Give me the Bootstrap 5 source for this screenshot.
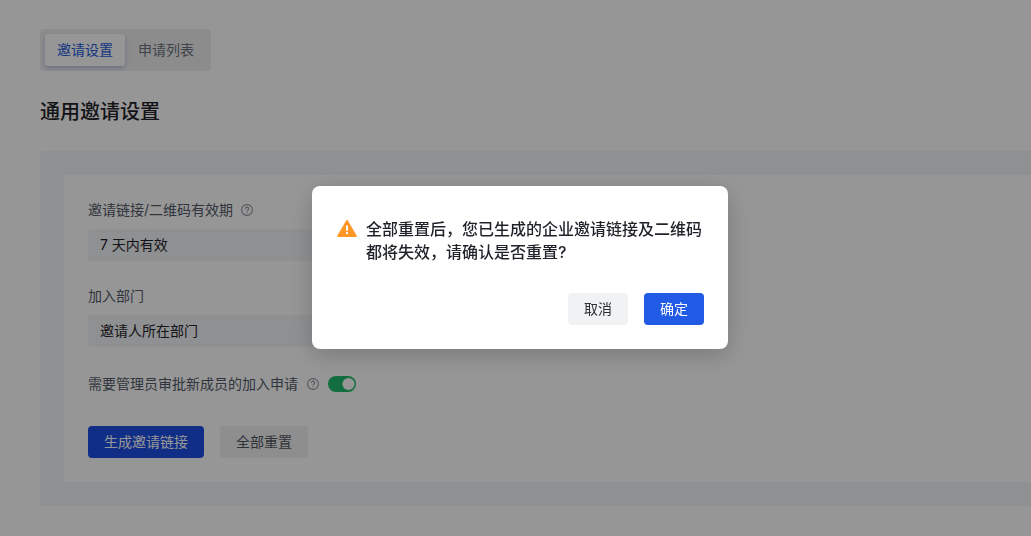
<!DOCTYPE html>
<html lang="zh-CN">
<head>
<meta charset="utf-8">
<meta name="viewport" content="width=device-width, initial-scale=1">
<title>通用邀请设置</title>
<link href="https://cdn.jsdelivr.net/npm/bootstrap@5.3.0/dist/css/bootstrap.min.css" rel="stylesheet">
<style>
  body { font-family: Inter, "Noto Sans CJK SC", sans-serif; font-size: 14px; line-height: 22px; color: #1f2329; background: #fff; }
  .page { padding: 29px 0 30px 40px; }
  .seg { background: #efeff0; padding: 5px; gap: 1px; border-radius: 4px; }
  .seg .nav-link { padding: 5px 12px; border-radius: 3px; color: #6b7480; line-height: 22px; }
  .seg .nav-link.active { background: #fff; color: #245bdb; box-shadow: 0 2px 5px rgba(36, 70, 160, .28); }
  .page-title { font-size: 20px; line-height: 28px; font-weight: 500; margin: 27px 0 25px; }
  .panel { background: #f3f5f9; padding: 24px 0 24px 24px; border-radius: 4px 0 0 4px; }
  .panel-body { background: #fff; padding: 24px; border-radius: 4px 0 0 4px; }
  .field-label { color: #545c6a; line-height: 22px; }
  .field-select { width: 320px; height: 32px; padding: 0 32px 0 12px; border: 0; border-radius: 4px; background-color: #f3f5f8; font-size: 14px; line-height: 22px; color: #1f2329; }
  .help { width: 12px; height: 12px; color: #8f959e; }
  .approval { min-height: 26px; margin-bottom: 29px; gap: 9px; }
  .form-switch .toggle { width: 28px; height: 16px; margin: 0; border: 0; background-color: #1fba6b; background-size: 14px 14px;
    background-image: url("data:image/svg+xml,%3Csvg xmlns='http://www.w3.org/2000/svg' viewBox='0 0 14 14'%3E%3Ccircle cx='6.5' cy='7' r='6.1' fill='%23fff'/%3E%3C/svg%3E") !important; }
  .form-switch .toggle:checked { background-color: #1fba6b; background-position: right center; }
  .btn { --bs-btn-font-size: 14px; --bs-btn-line-height: 22px; --bs-btn-padding-x: 16px; --bs-btn-padding-y: 5px; --bs-btn-border-width: 0; --bs-btn-border-radius: 4px; }
  .btn-main { --bs-btn-color: #fff; --bs-btn-bg: #215ae5; --bs-btn-hover-color: #fff; --bs-btn-hover-bg: #3370ff; }
  .btn-main-deep { --bs-btn-bg: #1e4ee6; }
  .btn-plain { --bs-btn-color: #2b2f36; --bs-btn-bg: #f1f2f4; --bs-btn-hover-bg: #e5e6e9; }
  .btn-plain-soft { --bs-btn-color: #51565d; --bs-btn-bg: #f1f1f3; }
  .modal-backdrop { --bs-backdrop-opacity: .41; }
  .confirm { padding: 0 0 2px 9px; }
  .confirm .modal-dialog { --bs-modal-width: 416px; }
  .confirm .modal-content { border: 0; border-radius: 8px; padding: 32px 24px 24px; box-shadow: 0 6px 24px rgba(0, 0, 0, .2); }
  .confirm-text { font-size: 16px; line-height: 23px; font-weight: 500; margin-bottom: 29px; }
  .warn { width: 22px; height: 22px; }
</style>
</head>
<body>
<main class="page">
  <nav class="nav seg d-inline-flex align-top" aria-label="邀请">
    <a class="nav-link active" href="#settings">邀请设置</a>
    <a class="nav-link" href="#requests">申请列表</a>
  </nav>
  <h1 class="page-title">通用邀请设置</h1>
  <section class="panel" id="settings">
    <form class="panel-body">
      <div class="mb-4">
        <div class="d-flex align-items-center mb-2">
          <label class="field-label me-2" for="expiry">邀请链接/二维码有效期</label>
          <svg class="help" viewBox="0 0 12 12" fill="none" stroke="currentColor" stroke-width="1.1" aria-hidden="true"><circle cx="6" cy="6" r="5.4"/><path d="M4.4 4.8a1.6 1.6 0 1 1 2.5 1.3c-.6.4-.9.6-.9 1.2"/><path d="M6 8.2v1"/></svg>
        </div>
        <select class="form-select field-select" id="expiry"><option>7 天内有效</option></select>
      </div>
      <div class="mb-4">
        <label class="field-label d-block mb-2" for="dept">加入部门</label>
        <select class="form-select field-select" id="dept"><option>邀请人所在部门</option></select>
      </div>
      <div class="approval d-flex align-items-center">
        <label class="field-label" for="approve">需要管理员审批新成员的加入申请</label>
        <svg class="help" viewBox="0 0 12 12" fill="none" stroke="currentColor" stroke-width="1.1" aria-hidden="true"><circle cx="6" cy="6" r="5.4"/><path d="M4.4 4.8a1.6 1.6 0 1 1 2.5 1.3c-.6.4-.9.6-.9 1.2"/><path d="M6 8.2v1"/></svg>
        <div class="form-switch d-flex p-0 m-0"><input class="form-check-input toggle" type="checkbox" role="switch" id="approve" checked></div>
      </div>
      <div class="d-flex gap-3">
        <button class="btn btn-main btn-main-deep" type="button">生成邀请链接</button>
        <button class="btn btn-plain btn-plain-soft" type="button">全部重置</button>
      </div>
    </form>
  </section>
</main>

<div class="modal-backdrop show"></div>
<div class="modal confirm d-block" tabindex="-1" role="dialog" aria-modal="true" aria-labelledby="confirmText">
  <div class="modal-dialog modal-dialog-centered">
    <div class="modal-content">
      <div class="d-flex gap-2">
        <svg class="warn flex-shrink-0" viewBox="0 0 22 22" aria-hidden="true"><path d="M10.2 2.5q.8-1.3 1.6 0l8.8 15q.7 1.4-.8 1.4H2.2q-1.5 0-.8-1.4z" fill="#ff9626"/><path d="M10 7.5h2v5.2h-2zM10 14h2v2h-2z" fill="#fff"/></svg>
        <p class="confirm-text" id="confirmText">全部重置后，您已生成的企业邀请链接及二维码都将失效，请确认是否重置?</p>
      </div>
      <div class="d-flex justify-content-end gap-3">
        <button class="btn btn-plain" type="button">取消</button>
        <button class="btn btn-main" type="button">确定</button>
      </div>
    </div>
  </div>
</div>
<script src="https://cdn.jsdelivr.net/npm/bootstrap@5.3.0/dist/js/bootstrap.bundle.min.js"></script>
</body>
</html>
